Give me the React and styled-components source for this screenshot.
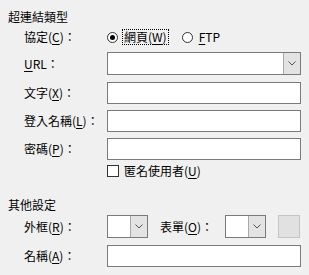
import React from "react";
import styled, { createGlobalStyle } from "styled-components";

const GlobalStyle = createGlobalStyle`
  html, body {
    margin: 0;
    padding: 0;
    background: #f0f0f0;
  }
  body {
    font-family: "Noto Sans CJK TC", "Noto Sans", sans-serif;
    font-size: 12px;
    color: #000;
  }
`;

const Page = styled.div`
  width: 309px;
  height: 275px;
  padding: 8px 0 0 8px;
  box-sizing: border-box;
  display: flex;
  flex-direction: column;
`;

const Heading = styled.div`
  height: 18px;
  line-height: 18px;
  margin-top: ${(p) => p.$mt || 0}px;
`;

const Row = styled.div`
  display: flex;
  align-items: center;
  height: ${(p) => p.$h}px;
  margin-top: ${(p) => p.$mt}px;
  padding-left: 16px;
`;

const Label = styled.div`
  width: 83px;
  flex: none;
  line-height: 16px;
  white-space: nowrap;
`;

const Key = styled.span`
  text-decoration: underline;
  text-underline-offset: 2px;
`;

const Input = styled.div`
  width: 194px;
  height: 22px;
  box-sizing: border-box;
  border: 1px solid #7a7a7a;
  background: #fff;
`;

const Combo = styled.div`
  width: ${(p) => p.$w}px;
  height: 23px;
  box-sizing: border-box;
  border: 1px solid #7a7a7a;
  background: #fff;
  display: flex;
  justify-content: flex-end;
  flex: none;
`;

const ComboButton = styled.div`
  width: 17px;
  height: 100%;
  box-sizing: border-box;
  background: #e3e3e3;
  border-left: 1px solid #a9a9a9;
  display: flex;
  align-items: center;
  justify-content: center;
`;

const Radio = styled.span`
  width: 11px;
  height: 11px;
  box-sizing: border-box;
  border: 1px solid #333;
  border-radius: 50%;
  background: #fff;
  display: inline-flex;
  align-items: center;
  justify-content: center;
  flex: none;
  &::after {
    content: "";
    width: 5px;
    height: 5px;
    border-radius: 50%;
    background: ${(p) => (p.$on ? "#000" : "transparent")};
  }
`;

const RadioText = styled.span`
  margin-left: 5px;
  padding: 0 1px;
  line-height: 14px;
  outline: ${(p) => (p.$focus ? "1px dotted #000" : "none")};
`;

const Option = styled.label`
  display: inline-flex;
  align-items: center;
  margin-right: ${(p) => p.$mr || 0}px;
`;

const Check = styled.span`
  width: 12px;
  height: 12px;
  box-sizing: border-box;
  border: 1px solid #333;
  background: #fff;
  flex: none;
`;

const CheckText = styled.span`
  margin-left: 5px;
`;

const InlineLabel = styled.div`
  margin-left: 12px;
  width: 65px;
  white-space: nowrap;
`;

const Swatch = styled.div`
  width: 22px;
  height: 23px;
  box-sizing: border-box;
  margin-left: 12px;
  border: 1px solid #c4c4c4;
  background: #e1e1e1;
`;

const Chevron = () => (
  <svg width="8" height="5" viewBox="0 0 8 5">
    <path d="M0.5 0.5 L4 4 L7.5 0.5" fill="none" stroke="#555" strokeWidth="1" />
  </svg>
);

const ComboBox = ({ width }) => (
  <Combo $w={width}>
    <ComboButton>
      <Chevron />
    </ComboButton>
  </Combo>
);

const TextRow = ({ mt, children }) => (
  <Row $h={22} $mt={mt}>
    <Label>{children}</Label>
    <Input />
  </Row>
);

export default function App() {
  return (
    <Page>
      <GlobalStyle />
      <Heading>超連結類型</Heading>
      <Row $h={18} $mt={2}>
        <Label>
          協定(<Key>C</Key>)：
        </Label>
        <Option $mr={14}>
          <Radio $on />
          <RadioText $focus>
            網頁(<Key>W</Key>)
          </RadioText>
        </Option>
        <Option>
          <Radio />
          <RadioText>
            <Key>F</Key>TP
          </RadioText>
        </Option>
      </Row>
      <Row $h={23} $mt={6}>
        <Label>
          <Key>U</Key>RL：
        </Label>
        <ComboBox width={194} />
      </Row>
      <TextRow mt={7}>
        文字(<Key>X</Key>)：
      </TextRow>
      <TextRow mt={6}>
        登入名稱(<Key>L</Key>)：
      </TextRow>
      <TextRow mt={6}>
        密碼(<Key>P</Key>)：
      </TextRow>
      <Row $h={17} $mt={2}>
        <Label />
        <Option>
          <Check />
          <CheckText>
            匿名使用者(<Key>U</Key>)
          </CheckText>
        </Option>
      </Row>
      <Heading $mt={17}>其他設定</Heading>
      <Row $h={23} $mt={1}>
        <Label>
          外框(<Key>R</Key>)：
        </Label>
        <ComboBox width={41} />
        <InlineLabel>
          表單(<Key>O</Key>)：
        </InlineLabel>
        <ComboBox width={41} />
        <Swatch />
      </Row>
      <TextRow mt={7}>
        名稱(<Key>A</Key>)：
      </TextRow>
    </Page>
  );
}
